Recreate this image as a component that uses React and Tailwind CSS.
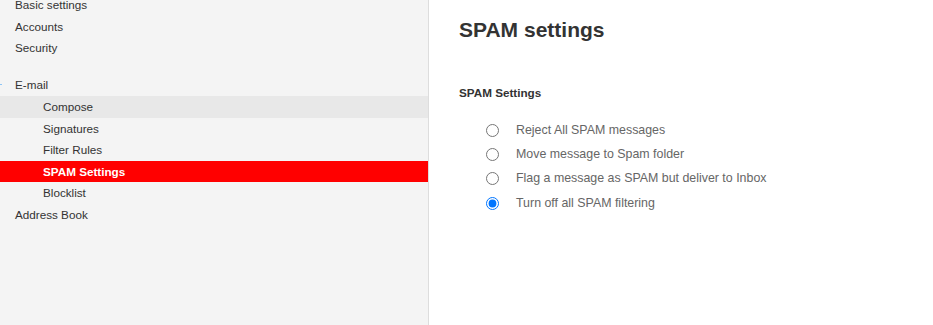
import React from 'react';

const font = { fontFamily: '"Liberation Sans", Arial, sans-serif' };

const SideItem = ({ label, sub, active, hover }) => {
  let cls = 'h-[21.6px] leading-[21.6px] text-[11.7px] whitespace-nowrap ';
  cls += sub ? 'pl-[43px] ' : 'pl-[15px] ';
  if (active) cls += 'bg-[#ff0000] text-white font-bold';
  else if (hover) cls += 'bg-[#e8e8e8] text-[#333]';
  else cls += 'text-[#333]';
  return <div className={cls}>{label}</div>;
};

const options = [
  'Reject All SPAM messages',
  'Move message to Spam folder',
  'Flag a message as SPAM but deliver to Inbox',
  'Turn off all SPAM filtering',
];

export default function App() {
  return (
    <div className="flex h-[325px] w-[933px] overflow-hidden bg-white" style={font}>
      {/* Sidebar */}
      <div className="w-[429px] shrink-0 bg-[#f4f4f4] border-r border-[#dddddd]">
        <div className="-mt-[6px]">
          <SideItem label="Basic settings" />
          <SideItem label="Accounts" />
          <SideItem label="Security" />
          <div className="h-[15.6px]" />
          <div className="relative">
            <span className="absolute left-0 top-[10px] h-[1px] w-[2px] bg-[#8ec5f5]" />
            <SideItem label="E-mail" />
          </div>
          <SideItem label="Compose" sub hover />
          <SideItem label="Signatures" sub />
          <SideItem label="Filter Rules" sub />
          <SideItem label="SPAM Settings" sub active />
          <SideItem label="Blocklist" sub />
          <SideItem label="Address Book" />
        </div>
      </div>

      {/* Main */}
      <div className="flex-1 pl-[30px] pt-[17px]">
        <h1 className="text-[21px] leading-[26px] font-bold text-[#333]">SPAM settings</h1>
        <h2 className="mt-[42px] text-[11.7px] leading-[16px] font-bold text-[#333]">SPAM Settings</h2>
        <div className="mt-[17px] pl-[27px]">
          {options.map((o, i) => (
            <label key={o} className="flex items-center h-[24.3px] text-[12.4px] text-[#666]">
              <input
                type="radio"
                name="spam"
                defaultChecked={i === 3}
                className="m-0 w-[13px] h-[13px] accent-[#0075ff]"
              />
              <span className="ml-[17px]">{o}</span>
            </label>
          ))}
        </div>
      </div>
    </div>
  );
}
